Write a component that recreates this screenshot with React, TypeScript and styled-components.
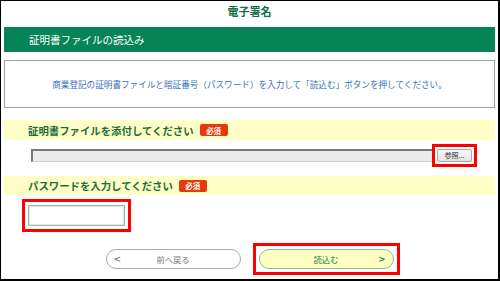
import React from 'react';
import styled, { createGlobalStyle } from 'styled-components';

const GlobalStyle = createGlobalStyle`
    body {
        margin: 0;
        background: #ffffff;
        font-family: "Noto Sans CJK JP", "Noto Sans", sans-serif;
    }
`;

const Frame = styled.div`
    box-sizing: border-box;
    width: 500px;
    height: 281px;
    border: 1px solid #000;
    border-right-width: 2px;
    border-bottom-width: 2px;
    padding: 0 3px;
    display: flex;
    flex-direction: column;
    overflow: hidden;
`;

const Title = styled.div`
    height: 26px;
    line-height: 20px;
    text-align: center;
    font-size: 11px;
    font-weight: bold;
    color: #17704a;
`;

const SectionBar = styled.div`
    height: 25px;
    background: #068458;
    color: #ffffff;
    font-size: 10.5px;
    line-height: 25px;
    padding-left: 25px;
`;

const InfoBox = styled.div`
    box-sizing: border-box;
    margin-top: 8px;
    height: 48px;
    border: 1px solid #a0a0a0;
    display: flex;
    align-items: center;
    justify-content: center;
    font-size: 8.6px;
    color: #3574b8;
`;

const LabelBar = styled.div<{ $top: number; $h: number }>`
    margin-top: ${p => p.$top}px;
    height: ${p => p.$h}px;
    background: #ffffc8;
    display: flex;
    align-items: center;
    padding-left: 24px;
    font-size: 10.4px;
    font-weight: bold;
    color: #1b6e3c;
`;

const Badge = styled.span`
    margin-left: 6px;
    background: #e8380d;
    color: #fff;
    font-size: 7.5px;
    font-weight: bold;
    width: 28px;
    height: 12px;
    border-radius: 2px;
    display: inline-flex;
    align-items: center;
    justify-content: center;
`;

const FileRow = styled.div`
    height: 36px;
    display: flex;
    align-items: flex-start;
    padding: 9px 23px 0 27px;
    box-sizing: border-box;
`;

const FileField = styled.div`
    flex: 1;
    box-sizing: border-box;
    height: 13px;
    background: #ececec;
    border-top: 2px solid #7a7a7a;
    border-left: 2px solid #7a7a7a;
    border-right: 1px solid #d0d0d0;
    border-bottom: 1px solid #d0d0d0;
`;

const Highlight = styled.span<{ $l: number }>`
    display: inline-flex;
    margin-left: ${p => p.$l}px;
    outline: 3px solid #ff0000;
    outline-offset: 2px;
`;

const BrowseButton = styled.button`
    box-sizing: border-box;
    width: 35px;
    height: 13px;
    padding: 0;
    border: 1px solid #a8a8a8;
    border-radius: 2px;
    background: linear-gradient(#f8f8f8, #e4e4e4);
    font-family: inherit;
    font-size: 7px;
    color: #333;
    line-height: 11px;
`;

const PasswordRow = styled.div`
    padding: 10px 0 0 24px;
    display: flex;
`;

const PasswordInput = styled.input`
    box-sizing: border-box;
    width: 97px;
    height: 21px;
    border: 1px solid #93bcae;
    box-shadow: inset 0 0 0 1px #dbe9e4;
    outline: none;
`;

const ButtonRow = styled.div`
    margin-top: 23px;
    display: flex;
    justify-content: center;
    gap: 18px;
`;

const Pill = styled.button<{ $primary?: boolean }>`
    box-sizing: border-box;
    width: 135px;
    height: 20px;
    border-radius: 10px;
    border: ${p => (p.$primary ? '1.5px solid #86bd97' : '1px solid #a9a9a9')};
    background: ${p => (p.$primary ? '#ffffc4' : '#ffffff')};
    color: ${p => (p.$primary ? '#2f7a4c' : '#777777')};
    font-family: inherit;
    font-size: 8.3px;
    display: flex;
    align-items: center;
    justify-content: center;
    position: relative;
    padding: 0;
`;

const Chevron = styled.span<{ $side: 'left' | 'right' }>`
    position: absolute;
    top: 50%;
    transform: translateY(-52%);
    ${p => (p.$side === 'left' ? 'left: 7px;' : 'right: 7px;')}
    font-family: "DejaVu Sans", sans-serif;
    font-size: 9px;
    font-weight: bold;
`;

const HighlightBox = styled.span`
    display: inline-flex;
    outline: 3px solid #ff0000;
    outline-offset: 3px;
`;

export default function App() {
    return (
        <>
            <GlobalStyle />
            <Frame>
                <Title>電子署名</Title>
                <SectionBar>証明書ファイルの読込み</SectionBar>
                <InfoBox>
                    商業登記の証明書ファイルと暗証番号（パスワード）を入力して「読込む」ボタンを押してください。
                </InfoBox>
                <LabelBar $top={12} $h={20}>
                    証明書ファイルを添付してください<Badge>必須</Badge>
                </LabelBar>
                <FileRow>
                    <FileField />
                    <Highlight $l={2}>
                        <BrowseButton>参照...</BrowseButton>
                    </Highlight>
                </FileRow>
                <LabelBar $top={0} $h={19}>
                    パスワードを入力してください<Badge>必須</Badge>
                </LabelBar>
                <PasswordRow>
                    <HighlightBox>
                        <PasswordInput type="password" />
                    </HighlightBox>
                </PasswordRow>
                <ButtonRow>
                    <Pill>
                        <Chevron $side="left">&lt;</Chevron>
                        前へ戻る
                    </Pill>
                    <HighlightBox>
                        <Pill $primary>
                            読込む
                            <Chevron $side="right">&gt;</Chevron>
                        </Pill>
                    </HighlightBox>
                </ButtonRow>
            </Frame>
        </>
    );
}
